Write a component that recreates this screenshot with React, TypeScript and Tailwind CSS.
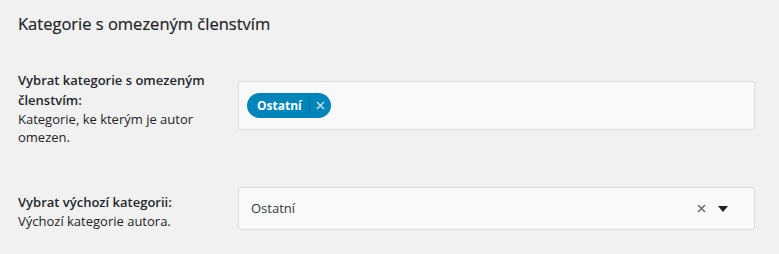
import React from "react";

export default function App() {
  return (
    <div
      className="w-[779px] h-[254px] bg-[#f1f1f1] text-[#1d2327] overflow-hidden"
      style={{ fontFamily: '"Open Sans", "Noto Sans", sans-serif' }}
    >
      <h2 className="pl-[18px] pt-[12px] text-[16.5px] leading-[24px] text-[#1d2327] [-webkit-text-stroke:0.2px_#1d2327]">
        Kategorie s omezeným členstvím
      </h2>
      <div className="flex pl-[18px] pt-[34px]">
        <div className="w-[220px] text-[13px]">
          <div className="font-semibold leading-[20px] text-[#23282d]">Vybrat kategorie s omezeným členstvím:</div>
          <div className="w-[190px] leading-[18px]">Kategorie, ke kterým je autor omezen.</div>
        </div>
        <div className="mt-[11px] w-[517px] h-[49px] bg-[#f9f9f9] border border-[#dcdcde] rounded-[3px] flex items-center pl-[8px]">
          <div className="h-[25px] rounded-full bg-[#0085ba] text-white flex items-center pl-[10px] pr-[6px] text-[12px] font-bold">
            <span>Ostatní</span>
            <span className="w-px h-[17px] bg-[#006c98] ml-[7px] mr-[6px]"></span>
            <svg width="9" height="9" viewBox="0 0 9 9">
              <path d="M1 1L8 8M8 1L1 8" stroke="#cde6f2" strokeWidth="1.4" />
            </svg>
          </div>
        </div>
      </div>
      <div className="flex pl-[18px] pt-[41px]">
        <div className="w-[220px] text-[13px] leading-[19px] pt-[6px]">
          <div className="font-semibold text-[#23282d]">Vybrat výchozí kategorii:</div>
          <div>Výchozí kategorie autora.</div>
        </div>
        <div className="w-[517px] h-[43px] bg-[#f9f9f9] border border-[#dcdcde] rounded-[3px] flex items-center pl-[12px] pr-[26px]">
          <span className="text-[13px] text-[#32373c] flex-1">Ostatní</span>
          <svg width="9" height="9" viewBox="0 0 9 9" className="mr-[12px]">
            <path d="M1 1L8 8M8 1L1 8" stroke="#666" strokeWidth="1.4" />
          </svg>
          <svg width="10" height="6" viewBox="0 0 10 6">
            <path d="M0 0H10L5 6Z" fill="#1d2327" />
          </svg>
        </div>
      </div>
    </div>
  );
}
